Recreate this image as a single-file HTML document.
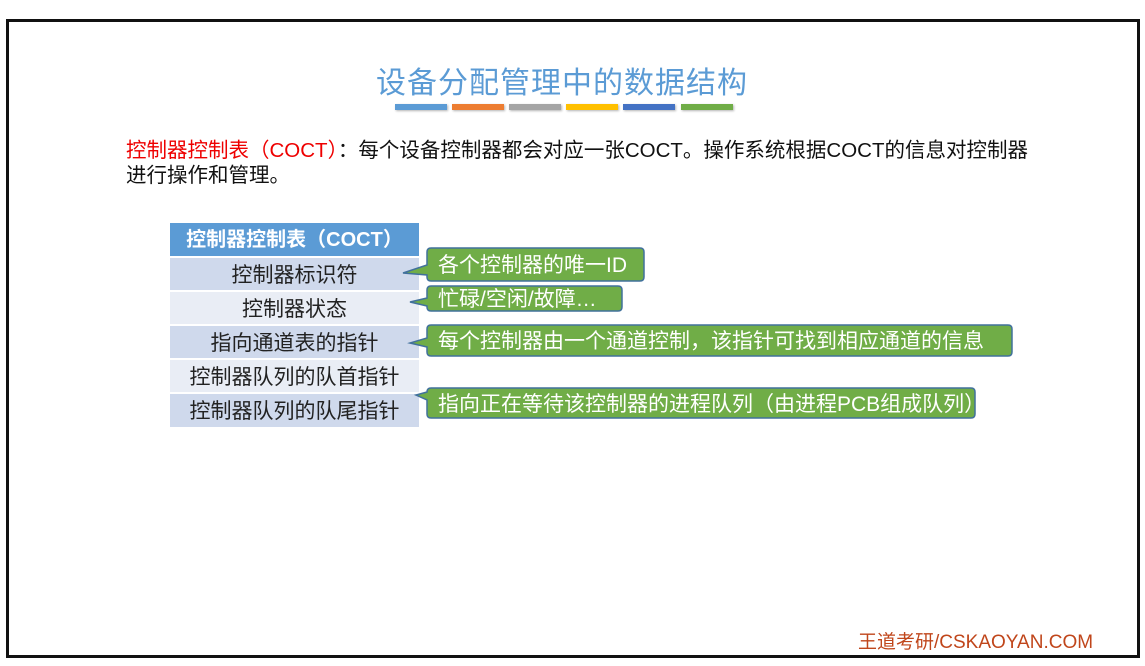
<!DOCTYPE html>
<html><head><meta charset="utf-8"><style>
body{margin:0;width:1145px;height:666px;background:#fff;position:relative;overflow:hidden;font-family:"Liberation Sans","Noto Sans CJK SC",sans-serif}
.frame{position:absolute;left:6px;top:19px;width:1128px;height:633px;border:3px solid #111}
.t{position:absolute;white-space:nowrap}
.bar{position:absolute;top:104px;height:6px;width:52px;box-shadow:1px 1px 2px rgba(0,0,0,.3)}
.row{position:absolute;left:170px;width:249px;height:32px;text-align:center;font-size:21px;line-height:35px;color:#222}
.co{position:absolute;color:#fff;font-size:21px;white-space:nowrap;line-height:26px}
</style></head><body>
<div class="frame"></div>
<div class="t" style="left:376px;top:58px;font-size:30px;color:#5b9bd5;letter-spacing:1px">设备分配管理中的数据结构</div>
<div class="bar" style="left:395px;background:#5b9bd5"></div>
<div class="bar" style="left:452px;background:#ed7d31"></div>
<div class="bar" style="left:509px;background:#a5a5a5"></div>
<div class="bar" style="left:566px;background:#ffc000"></div>
<div class="bar" style="left:623px;background:#4472c4"></div>
<div class="bar" style="left:681px;background:#70ad47"></div>
<div class="t" style="left:126px;top:138px;font-size:20.5px;color:#111;line-height:25px"><span style="color:#e00">控制器控制表（COCT）</span>：每个设备控制器都会对应一张COCT。操作系统根据COCT的信息对控制器<br>进行操作和管理。</div>
<div class="row" style="top:223px;height:33px;background:#5b9bd5;color:#fff;font-weight:bold;line-height:35px;font-size:20px">控制器控制表（COCT）</div>
<div class="row" style="top:258px;background:#cfd9ec">控制器标识符</div>
<div class="row" style="top:292px;background:#e9edf5">控制器状态</div>
<div class="row" style="top:326px;background:#cfd9ec">指向通道表的指针</div>
<div class="row" style="top:360px;background:#e9edf5">控制器队列的队首指针</div>
<div class="row" style="top:394px;height:33px;background:#cfd9ec">控制器队列的队尾指针</div>
<svg width="1145" height="666" style="position:absolute;left:0;top:0">
<g fill="#70ad47" stroke="#41719c" stroke-width="1.5">
<path d="M431,248 H640 Q644,248 644,252 V277 Q644,281 640,281 H431 Q427,281 427,277 V275 L403,273 L427,265 V252 Q427,248 431,248 Z"/>
<path d="M431,286 H618 Q622,286 622,290 V307 Q622,311 618,311 H431 Q427,311 427,307 V306 L410,302 L427,298 V290 Q427,286 431,286 Z"/>
<path d="M431,325 H1008 Q1012,325 1012,329 V352 Q1012,356 1008,356 H431 Q427,356 427,352 V347 L410,343 L427,338 V329 Q427,325 431,325 Z"/>
<path d="M431,388 H971 Q975,388 975,392 V414 Q975,418 971,418 H431 Q427,418 427,414 V400 L416,395 L427,392 Q427,388 431,388 Z"/>
</g></svg>
<div class="co" style="left:438px;top:253px">各个控制器的唯一ID</div>
<div class="co" style="left:438px;top:287px">忙碌/空闲/故障…</div>
<div class="co" style="left:438px;top:329px">每个控制器由一个通道控制，该指针可找到相应通道的信息</div>
<div class="co" style="left:438px;top:392px">指向正在等待该控制器的进程队列（由进程PCB组成队列）</div>
<div class="t" style="left:858px;top:627px;font-size:19px;color:#c0461b">王道考研/CSKAOYAN.COM</div>
</body></html>
